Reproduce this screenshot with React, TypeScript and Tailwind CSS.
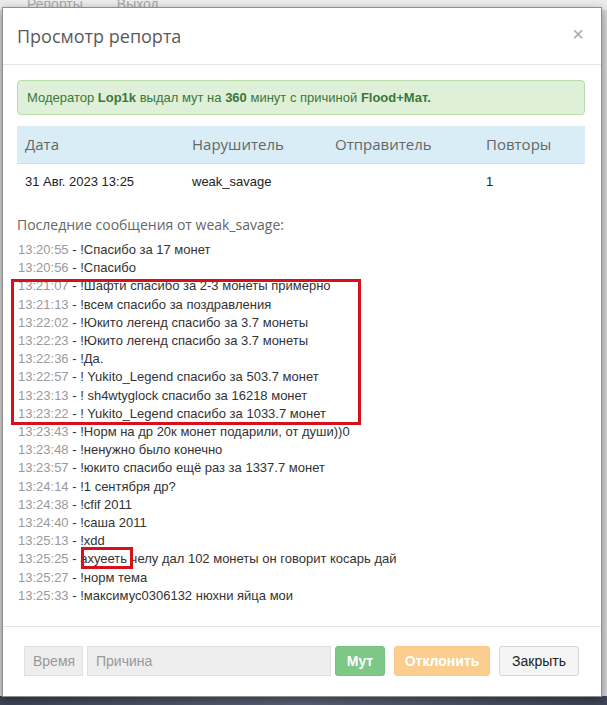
const messages: [string, string][] = [
  ['13:20:55', '!Спасибо за 17 монет'],
  ['13:20:56', '!Спасибо'],
  ['13:21:07', '!Шафти спасибо за 2-3 монеты примерно'],
  ['13:21:13', '!всем спасибо за поздравления'],
  ['13:22:02', '!Юкито легенд спасибо за 3.7 монеты'],
  ['13:22:23', '!Юкито легенд спасибо за 3.7 монеты'],
  ['13:22:36', '!Да.'],
  ['13:22:57', '! Yukito_Legend спасибо за 503.7 монет'],
  ['13:23:13', '! sh4wtyglock спасибо за 16218 монет'],
  ['13:23:22', '! Yukito_Legend спасибо за 1033.7 монет'],
  ['13:23:43', '!Норм на др 20к монет подарили, от души))0'],
  ['13:23:48', '!ненужно было конечно'],
  ['13:23:57', '!юкито спасибо ещё раз за 1337.7 монет'],
  ['13:24:14', '!1 сентября др?'],
  ['13:24:38', '!cfif 2011'],
  ['13:24:40', '!саша 2011'],
  ['13:25:13', '!xdd'],
  ['13:25:25', 'ахуееть челу дал 102 монеты он говорит косарь дай'],
  ['13:25:27', '!норм тема'],
  ['13:25:33', '!максимус0306132 нюхни яйца мои'],
];

const sans = "font-['Liberation_Sans',Arial,sans-serif]";
const open = "font-['Open_Sans','Noto_Sans',sans-serif]";

export default function App() {
  return (
    <div className={`relative w-[607px] h-[705px] overflow-hidden bg-[#e4e6e8] ${sans}`}>
      {/* faded page behind the modal */}
      <div className="flex h-[10px] items-end gap-[34px] bg-[#ececec] pl-[27px] text-[14px] leading-[14px] text-[#a8a8a8]">
        <span className="-mb-[1px]">Репорты</span>
        <span className="-mb-[1px]">Выход</span>
      </div>
      <div className="h-[686px] bg-[#d6d8da]" />
      <div className="h-[9px] bg-gradient-to-r from-[#3d4658] via-[#5a6478] to-[#3d4658]" />

      {/* modal */}
      <div className="absolute left-[2px] top-[7px] flex h-[690px] w-[600px] flex-col border border-[#8f8f8f] bg-white shadow-[0_3px_9px_rgba(0,0,0,0.4)]">
        <div className="flex h-[57px] shrink-0 items-center justify-between border-b border-[#e5e5e5] pl-[14px] pr-[17px]">
          <h4 className={`${open} text-[18px] leading-none text-[#5a5a5a]`}>Просмотр репорта</h4>
          <span className="-mt-[4px] text-[20px] leading-none text-[#a8a8a8]">×</span>
        </div>

        <div className="h-[561px] shrink-0 pl-[14px] pr-[16px] pt-[15px]">
          <div className="flex h-[35px] items-center rounded-[4px] border border-[#b9dca8] bg-[#dff0d8] px-[9px] text-[13px] text-[#3c763d]">
            <span>
              Модератор <b>Lop1k</b> выдал мут на <b>360</b> минут с причиной <b>Flood+Мат.</b>
            </span>
          </div>

          <div className="mt-[11px]">
            <div className={`grid h-[38px] grid-cols-[167px_143px_151px_1fr] items-center border-b border-[#cfe3ee] bg-[#d9edf7] pl-[8px] ${open} text-[15px] text-[#666]`}>
              <span>Дата</span>
              <span>Нарушитель</span>
              <span>Отправитель</span>
              <span>Повторы</span>
            </div>
            <div className="grid h-[36px] grid-cols-[167px_143px_151px_1fr] items-center pl-[8px] text-[13px] text-[#222]">
              <span>31 Авг. 2023 13:25</span>
              <span>weak_savage</span>
              <span></span>
              <span>1</span>
            </div>
          </div>

          <p className={`mt-[15px] ${open} text-[14px] leading-[20px] text-[#666]`}>
            Последние сообщения от weak_savage:
          </p>

          <div className="mt-[6px] pl-[1px] text-[13px] leading-[18.2px] text-[#333]">
            {messages.map(([t, m], i) => (
              <div key={i} className="whitespace-nowrap">
                <span className="text-[#9a9a9a]">{t}</span> - {m}
              </div>
            ))}
          </div>
        </div>

        <div className="flex flex-1 items-start gap-[4px] border-t border-[#e5e5e5] px-[21px] pt-[19px] text-[14px]">
          <div className="flex h-[30px] w-[59px] items-center border border-[#e0e0e0] bg-[#eeeeee] px-[8px] text-[#999]">
            Время
          </div>
          <div className="flex h-[30px] w-[244px] items-center border border-[#e0e0e0] bg-[#eeeeee] px-[8px] text-[#999]">
            Причина
          </div>
          <div className="flex h-[30px] w-[50px] items-center justify-center rounded-[3px] border border-[#76c07f] bg-[#7dc787] font-bold text-white">
            Мут
          </div>
          <div className="ml-[5px] flex h-[30px] w-[96px] items-center justify-center rounded-[3px] border border-[#f7c98a] bg-[#fbcd8e] font-bold text-white">
            Отклонить
          </div>
          <div className="ml-[5px] flex h-[30px] w-[80px] items-center justify-center rounded-[3px] border border-[#d4d4d4] bg-[#f5f5f5] text-[#222]">
            Закрыть
          </div>
        </div>
      </div>

      {/* red annotation boxes */}
      <div className="absolute left-[11px] top-[279px] h-[146px] w-[350px] border-[3px] border-[#d8101c]" />
      <div className="absolute left-[81px] top-[547px] h-[22px] w-[52px] border-[3px] border-[#d8101c]" />
    </div>
  );
}
